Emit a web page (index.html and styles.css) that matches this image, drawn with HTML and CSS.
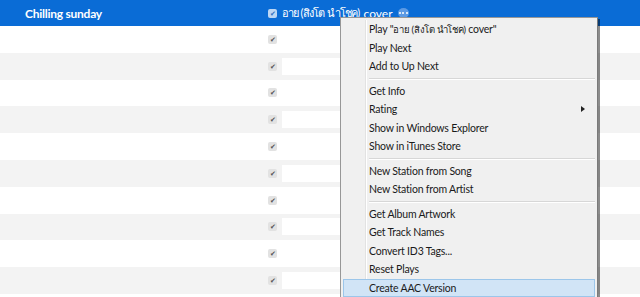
FILE: index.html
```html
<!DOCTYPE html>
<html lang="th">
<head>
    <meta charset="UTF-8">
    <title>Chilling sunday</title>
    <link rel="stylesheet" href="styles.css">
</head>
<body>
    <div class="list">
        <div class="row head">
            <div class="name">Chilling sunday</div>
            <div class="check"><span class="box on">&#10004;</span></div>
            <div class="title"><span class="th">อาย (สิงโต นำโชค)</span> cover <span class="more"><i></i><i></i><i></i></span></div>
        </div>
        <div class="row"><div class="name"></div><div class="check"><span class="box">&#10004;</span></div><div class="title"></div></div>
        <div class="row alt"><div class="name"></div><div class="check"><span class="box">&#10004;</span></div><div class="title"><span class="blank"></span></div></div>
        <div class="row"><div class="name"></div><div class="check"><span class="box">&#10004;</span></div><div class="title"></div></div>
        <div class="row alt"><div class="name"></div><div class="check"><span class="box">&#10004;</span></div><div class="title"><span class="blank"></span></div></div>
        <div class="row"><div class="name"></div><div class="check"><span class="box">&#10004;</span></div><div class="title"></div></div>
        <div class="row alt"><div class="name"></div><div class="check"><span class="box">&#10004;</span></div><div class="title"><span class="blank"></span></div></div>
        <div class="row"><div class="name"></div><div class="check"><span class="box">&#10004;</span></div><div class="title"></div></div>
        <div class="row alt"><div class="name"></div><div class="check"><span class="box">&#10004;</span></div><div class="title"><span class="blank"></span></div></div>
        <div class="row"><div class="name"></div><div class="check"><span class="box">&#10004;</span></div><div class="title"></div></div>
        <div class="row alt"><div class="name"></div><div class="check"><span class="box">&#10004;</span></div><div class="title"><span class="blank"></span></div></div>
    </div>

    <!-- menú contextual -->
    <div class="menu">
        <div class="item">Play "<span class="th-sm">อาย (สิงโต นำโชค)</span> cover"</div>
        <div class="item">Play Next</div>
        <div class="item">Add to Up Next</div>
        <div class="sep"></div>
        <div class="item">Get Info</div>
        <div class="item sub">Rating</div>
        <div class="item">Show in Windows Explorer</div>
        <div class="item">Show in iTunes Store</div>
        <div class="sep"></div>
        <div class="item">New Station from Song</div>
        <div class="item">New Station from Artist</div>
        <div class="sep"></div>
        <div class="item">Get Album Artwork</div>
        <div class="item">Get Track Names</div>
        <div class="item">Convert ID3 Tags...</div>
        <div class="item">Reset Plays</div>
        <div class="item hover">Create AAC Version</div>
    </div>
</body>
</html>
```

FILE: styles.css
```css
body { margin: 0; font-family: "Lato", "Noto Sans", sans-serif; font-size: 12px; color: #1a1a1a; background: #fff; overflow: hidden; }
.list { width: 640px; }
.row { display: flex; align-items: center; height: 26.8px; background: #fff; }
.row.alt { background: #f3f3f3; }
.row.head { height: 26px; background: #0a6cd6; color: #fff; }
.name { width: 270px; padding-left: 25px; box-sizing: border-box; font-weight: bold; font-size: 12px; letter-spacing: -0.25px; }
.check { width: 12px; margin-left: -2px; margin-right: 2px; }
.box { display: block; width: 9px; height: 9px; border-radius: 2px; background: #e2e2e2; color: #555; font-size: 7px; line-height: 9px; text-align: center; }
.box.on { background: #bcd6f4; color: #2f6fbf; }
.title { flex: 1; display: flex; align-items: center; gap: 4px; font-size: 12px; }
.th { font-size: 11px; letter-spacing: -0.8px; }
.th-sm { font-size: 9.5px; letter-spacing: -0.3px; }
.blank { display: block; width: 58px; height: 17px; background: #fff; }
.more { display: inline-flex; gap: 1.5px; align-items: center; justify-content: center; width: 11px; height: 10px; margin-left: 1px; border-radius: 50%; background: #5b9ae4; }
.more i { display: block; width: 2px; height: 2px; background: #fff; border-radius: 50%; }
.menu { position: absolute; left: 340px; top: 17px; width: 256px; padding: 2px 0; background: #f0f0f0; border: 1px solid #979797; border-right-color: #7a7a7a; box-shadow: 2px 2px 0 rgba(0,0,0,0.45); }
.menu::before { content: ""; position: absolute; left: 24px; top: 2px; bottom: 0; border-left: 1px solid #e2e2e2; border-right: 1px solid #fff; }
.item { position: relative; height: 18.5px; line-height: 18.5px; padding-left: 26px; margin: 0 2px; font-size: 10.5px; letter-spacing: -0.2px; color: #1a1a1a; white-space: nowrap; }
.item.sub::after { content: ""; position: absolute; right: 10px; top: 6px; border-left: 4px solid #222; border-top: 3.5px solid transparent; border-bottom: 3.5px solid transparent; }
.item.hover { background: #d1e4f6; outline: 1px solid #9cc6ea; outline-offset: -1px; }
.sep { height: 1px; margin: 2px 2px 2px 28px; background: #d7d7d7; border-bottom: 1px solid #fff; }
```
